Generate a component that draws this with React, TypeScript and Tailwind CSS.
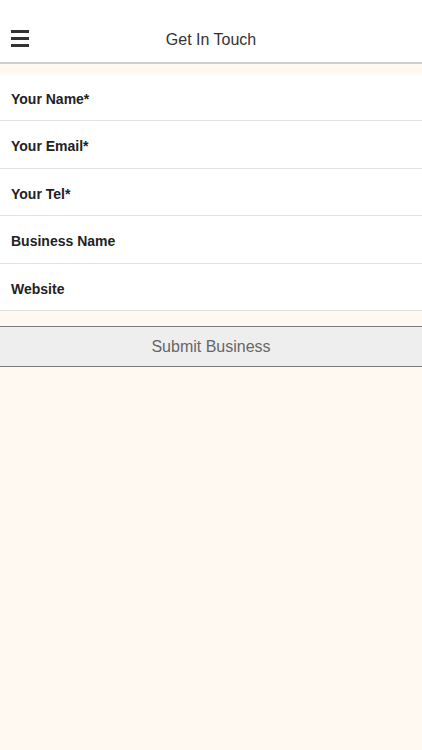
import React from "react";

const rows: { label: string; h: string }[] = [
  { label: "Your Name*", h: "h-[47px]" },
  { label: "Your Email*", h: "h-[48px]" },
  { label: "Your Tel*", h: "h-[47px]" },
  { label: "Business Name", h: "h-[48px]" },
  { label: "Website", h: "h-[47px]" },
];

export default function App() {
  return (
    <div
      className="w-[422px] min-h-[750px] bg-[#fff9f2]"
      style={{ fontFamily: '"Liberation Sans", Arial, sans-serif' }}
    >
      <header className="relative h-[64px] bg-white border-b-2 border-[#cfcfcf] flex justify-center">
        <div className="absolute left-[11px] top-[30px] flex flex-col gap-[4px]">
          <div className="w-[18px] h-[3px] bg-[#333]" />
          <div className="w-[18px] h-[3px] bg-[#333]" />
          <div className="w-[18px] h-[3px] bg-[#333]" />
        </div>
        <span className="mt-[31px] text-[16px] leading-[18px] text-[#333]">Get In Touch</span>
      </header>
      <div className="h-[10px]" />
      <div className="bg-white">
        {rows.map((r) => (
          <div
            key={r.label}
            className={`${r.h} border-b border-[#e2e2e2] flex items-center pl-[11px] pt-[4px]`}
          >
            <span className="text-[14px] font-bold text-[#222]">{r.label}</span>
          </div>
        ))}
      </div>
      <div className="h-[15px]" />
      <div className="h-[41px] bg-[#eeeeee] border-y border-[#7a7a7a] flex items-center justify-center">
        <span className="text-[16px] text-[#666]">Submit Business</span>
      </div>
    </div>
  );
}
